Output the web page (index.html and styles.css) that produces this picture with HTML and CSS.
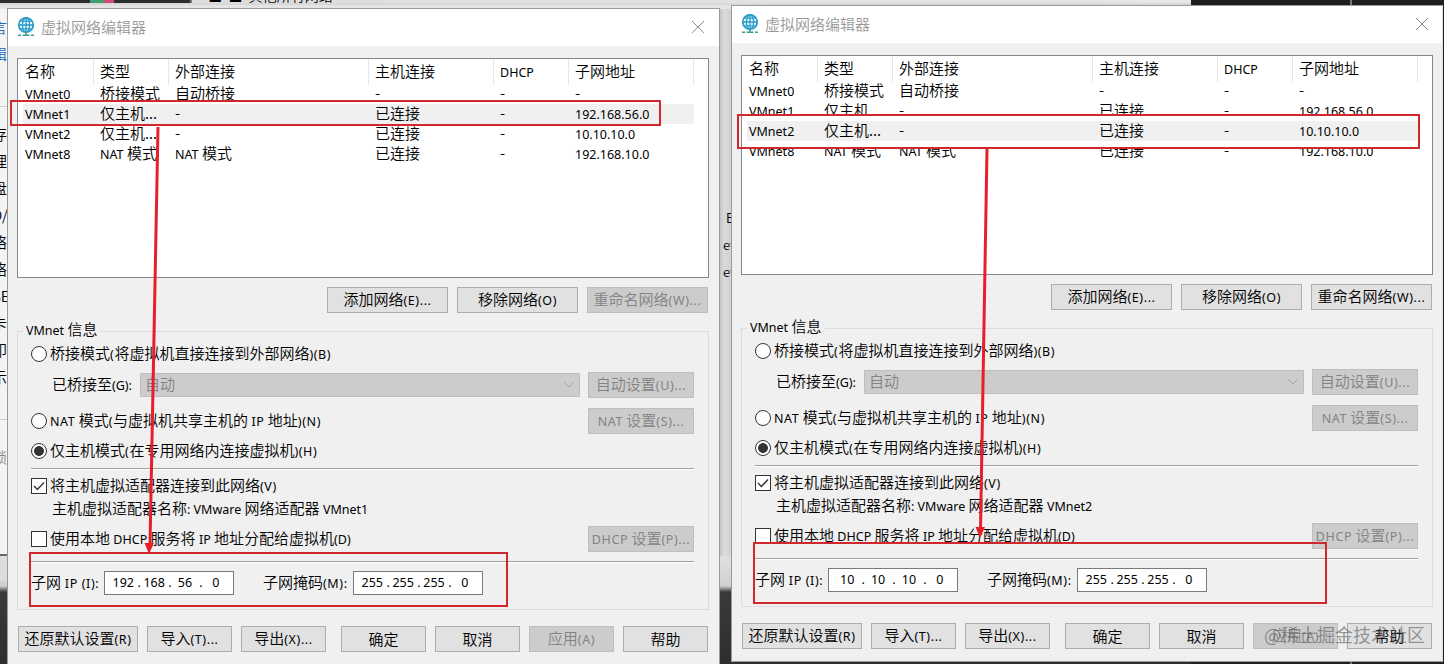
FILE: index.html
```
<!DOCTYPE html>
<html lang="zh">
<head>
    <meta charset="UTF-8">
    <meta name="viewport" content="width=device-width, initial-scale=1.0">
    <title>虚拟网络编辑器</title>
    <link rel="stylesheet" href="styles.css">
</head>
<body>
    <div class="desktop">
        <!-- 背景窗口 -->
        <div class="back-top"><span class="back-tab"></span><span class="back-tab-text">  ■  ■  其他所有网络</span></div>
        <div class="back-dark"></div>
        <div class="back-left">
            <span class="link">言</span>
            <span class="link">辑</span>
            <span class="line"></span>
            <span>存</span>
            <span>理</span>
            <span>盘</span>
            <span>D/</span>
            <span>络</span>
            <span>络</span>
            <span>SE</span>
            <span>卡</span>
            <span>印</span>
            <span>示</span>
            <span class="line low"></span>
            <span class="muted">锁</span>
        </div>
        <div class="back-middle">
            <span>E</span>
            <span>et</span>
            <span>et</span>
        </div>

        <!-- 左侧窗口：VMnet1 -->
        <div class="dialog dialog-left">
            <div class="titlebar">
                <svg class="logo" viewBox="0 0 16 20">
                    <circle cx="8" cy="8" r="7.2" fill="#eaf7fc" stroke="#2a9cc8" stroke-width="1.7"/>
                    <path d="M8 1v14M1 8h14M2.5 4.2h11M2.5 11.8h11" fill="none" stroke="#2a9cc8" stroke-width="1.3"/>
                    <ellipse cx="8" cy="8" rx="3.6" ry="7" fill="none" stroke="#2a9cc8" stroke-width="1.3"/>
                    <path d="M8 15v3M0 18.2h3M4.5 18.2h7M13 18.2h3" stroke="#3f9f92" stroke-width="1.6"/>
                </svg>
                <span class="title">虚拟网络编辑器</span>
                <svg class="close" viewBox="0 0 12 12"><path d="M0 0l12 12M12 0L0 12" stroke="#8c8c8c"/></svg>
            </div>
            <div class="client">
                <div class="list">
                    <div class="list-row list-head"><span>名称</span><span>类型</span><span>外部连接</span><span>主机连接</span><span><small>DHCP</small></span><span>子网地址</span></div>
                    <div class="list-row"><span><small>VMnet0</small></span><span>桥接模式</span><span>自动桥接</span><span>-</span><span>-</span><span>-</span></div>
                    <div class="list-row selected"><span><small>VMnet1</small></span><span>仅主机...</span><span>-</span><span>已连接</span><span>-</span><span><small>192.168.56.0</small></span></div>
                    <div class="list-row"><span><small>VMnet2</small></span><span>仅主机...</span><span>-</span><span>已连接</span><span>-</span><span><small>10.10.10.0</small></span></div>
                    <div class="list-row"><span><small>VMnet8</small></span><span><small>NAT</small> 模式</span><span><small>NAT</small> 模式</span><span>已连接</span><span>-</span><span><small>192.168.10.0</small></span></div>
                </div>
                <div class="list-buttons">
                    <button>添加网络<small>(E)...</small></button>
                    <button>移除网络<small>(O)</small></button>
                    <button disabled>重命名网络<small>(W)...</small></button>
                </div>
                <fieldset class="group">
                    <legend><small>VMnet</small> 信息</legend>
                    <div class="row row-bridge"><i class="radio"></i><span>桥接模式<small>(</small>将虚拟机直接连接到外部网络<small>)(B)</small></span></div>
                    <div class="row row-adapter">
                        <span class="indent">已桥接至<small>(G):</small></span>
                        <div class="combo"><span>自动</span><svg viewBox="0 0 10 6"><path d="M0.5 0.5L5 5L9.5 0.5" fill="none" stroke="#a3a3a3"/></svg></div>
                        <button disabled>自动设置<small>(U)...</small></button>
                    </div>
                    <div class="row row-nat"><i class="radio"></i><span><small>NAT</small> 模式<small>(</small>与虚拟机共享主机的 <small>IP</small> 地址<small>)(N)</small></span><button disabled><small>NAT</small> 设置<small>(S)...</small></button></div>
                    <div class="row row-host"><i class="radio checked"></i><span>仅主机模式<small>(</small>在专用网络内连接虚拟机<small>)(H)</small></span></div>
                    <hr class="sep-host">
                    <div class="row row-connect"><i class="check"><svg viewBox="0 0 14 14"><path d="M2 7l3.4 3.5L12 3.5" fill="none" stroke="#333" stroke-width="1.4"/></svg></i><span>将主机虚拟适配器连接到此网络<small>(V)</small></span></div>
                    <div class="row row-name"><span class="indent">主机虚拟适配器名称<small>: VMware</small> 网络适配器 <small>VMnet1</small></span></div>
                    <div class="row row-dhcp"><i class="check"></i><span>使用本地 <small>DHCP</small> 服务将 <small>IP</small> 地址分配给虚拟机<small>(D)</small></span><button disabled><small>DHCP</small> 设置<small>(P)...</small></button></div>
                    <hr class="sep-dhcp">
                    <div class="row row-ip">
                        <span class="ip-label">子网<small> IP (I):</small></span>
                        <div class="ip"><b>192</b>.<b>168</b>.<b>56</b>.<b>0</b></div>
                        <span class="mask-label">子网掩码<small>(M):</small></span>
                        <div class="ip"><b>255</b>.<b>255</b>.<b>255</b>.<b>0</b></div>
                    </div>
                </fieldset>
                <div class="footer">
                    <button class="wide">还原默认设置<small>(R)</small></button>
                    <button>导入<small>(T)...</small></button>
                    <button>导出<small>(X)...</small></button>
                    <button class="ok">确定</button>
                    <button>取消</button>
                    <button disabled>应用<small>(A)</small></button>
                    <button>帮助</button>
                </div>
            </div>
        </div>

        <!-- 右侧窗口：VMnet2 -->
        <div class="dialog dialog-right">
            <div class="titlebar">
                <svg class="logo" viewBox="0 0 16 20">
                    <circle cx="8" cy="8" r="7.2" fill="#eaf7fc" stroke="#2a9cc8" stroke-width="1.7"/>
                    <path d="M8 1v14M1 8h14M2.5 4.2h11M2.5 11.8h11" fill="none" stroke="#2a9cc8" stroke-width="1.3"/>
                    <ellipse cx="8" cy="8" rx="3.6" ry="7" fill="none" stroke="#2a9cc8" stroke-width="1.3"/>
                    <path d="M8 15v3M0 18.2h3M4.5 18.2h7M13 18.2h3" stroke="#3f9f92" stroke-width="1.6"/>
                </svg>
                <span class="title">虚拟网络编辑器</span>
                <svg class="close" viewBox="0 0 12 12"><path d="M0 0l12 12M12 0L0 12" stroke="#8c8c8c"/></svg>
            </div>
            <div class="client">
                <div class="list">
                    <div class="list-row list-head"><span>名称</span><span>类型</span><span>外部连接</span><span>主机连接</span><span><small>DHCP</small></span><span>子网地址</span></div>
                    <div class="list-row"><span><small>VMnet0</small></span><span>桥接模式</span><span>自动桥接</span><span>-</span><span>-</span><span>-</span></div>
                    <div class="list-row"><span><small>VMnet1</small></span><span>仅主机...</span><span>-</span><span>已连接</span><span>-</span><span><small>192.168.56.0</small></span></div>
                    <div class="list-row selected"><span><small>VMnet2</small></span><span>仅主机...</span><span>-</span><span>已连接</span><span>-</span><span><small>10.10.10.0</small></span></div>
                    <div class="list-row"><span><small>VMnet8</small></span><span><small>NAT</small> 模式</span><span><small>NAT</small> 模式</span><span>已连接</span><span>-</span><span><small>192.168.10.0</small></span></div>
                </div>
                <div class="list-buttons">
                    <button>添加网络<small>(E)...</small></button>
                    <button>移除网络<small>(O)</small></button>
                    <button>重命名网络<small>(W)...</small></button>
                </div>
                <fieldset class="group">
                    <legend><small>VMnet</small> 信息</legend>
                    <div class="row row-bridge"><i class="radio"></i><span>桥接模式<small>(</small>将虚拟机直接连接到外部网络<small>)(B)</small></span></div>
                    <div class="row row-adapter">
                        <span class="indent">已桥接至<small>(G):</small></span>
                        <div class="combo"><span>自动</span><svg viewBox="0 0 10 6"><path d="M0.5 0.5L5 5L9.5 0.5" fill="none" stroke="#a3a3a3"/></svg></div>
                        <button disabled>自动设置<small>(U)...</small></button>
                    </div>
                    <div class="row row-nat"><i class="radio"></i><span><small>NAT</small> 模式<small>(</small>与虚拟机共享主机的 <small>IP</small> 地址<small>)(N)</small></span><button disabled><small>NAT</small> 设置<small>(S)...</small></button></div>
                    <div class="row row-host"><i class="radio checked"></i><span>仅主机模式<small>(</small>在专用网络内连接虚拟机<small>)(H)</small></span></div>
                    <hr class="sep-host">
                    <div class="row row-connect"><i class="check"><svg viewBox="0 0 14 14"><path d="M2 7l3.4 3.5L12 3.5" fill="none" stroke="#333" stroke-width="1.4"/></svg></i><span>将主机虚拟适配器连接到此网络<small>(V)</small></span></div>
                    <div class="row row-name"><span class="indent">主机虚拟适配器名称<small>: VMware</small> 网络适配器 <small>VMnet2</small></span></div>
                    <div class="row row-dhcp"><i class="check"></i><span>使用本地 <small>DHCP</small> 服务将 <small>IP</small> 地址分配给虚拟机<small>(D)</small></span><button disabled><small>DHCP</small> 设置<small>(P)...</small></button></div>
                    <hr class="sep-dhcp">
                    <div class="row row-ip">
                        <span class="ip-label">子网<small> IP (I):</small></span>
                        <div class="ip"><b>10</b>.<b>10</b>.<b>10</b>.<b>0</b></div>
                        <span class="mask-label">子网掩码<small>(M):</small></span>
                        <div class="ip"><b>255</b>.<b>255</b>.<b>255</b>.<b>0</b></div>
                    </div>
                </fieldset>
                <div class="footer">
                    <button class="wide">还原默认设置<small>(R)</small></button>
                    <button>导入<small>(T)...</small></button>
                    <button>导出<small>(X)...</small></button>
                    <button class="ok">确定</button>
                    <button>取消</button>
                    <button disabled>应用<small>(A)</small></button>
                    <button>帮助</button>
                </div>
            </div>
        </div>

        <!-- 红色标注 -->
        <div class="mark mark-row1"></div>
        <div class="mark mark-ip1"></div>
        <div class="mark mark-row2"></div>
        <div class="mark mark-ip2"></div>
        <svg class="arrows" viewBox="0 0 1444 664">
            <path d="M158 127L150 545M987 149L980.5 530" stroke="#e5202a" stroke-width="3"/>
            <path d="M144.5 543h9.5l-5 11zM975.5 527h9.5l-5 11z" fill="#e5202a"/>
        </svg>
        <div class="watermark">@稀土掘金技术社区</div>
    </div>
</body>
</html>
```
FILE: styles.css
```
* {
    box-sizing: border-box;
}
body {
    margin: 0;
    font-family: "Noto Sans CJK SC", sans-serif;
    font-size: 15px;
    font-weight: 350;
    color: #000;
}
small {
    font-family: "Noto Sans", sans-serif;
    font-size: 12.5px;
    font-weight: 400;
    white-space: pre;
}
.desktop {
    position: relative;
    width: 1444px;
    height: 664px;
    overflow: hidden;
    background: linear-gradient(#e4e4e4 555px, #555 555px, #555 556px, #e0e0e0 556px, #d0d0d0 586px, #3a3a3a 592px, #2e2e2e);
}

/* 背景窗口 */
.back-top {
    position: absolute;
    left: 0;
    top: 0;
    width: 1191px;
    height: 5px;
    overflow: hidden;
    background: linear-gradient(90deg, #2d2d2d 190px, #777 190px, #777 192px, #ddd 192px, #e6e6e6);
    border-bottom: 2px solid #d8d8d8;
}
.back-tab {
    position: absolute;
    left: 90px;
    top: 0;
    width: 24px;
    height: 3px;
    background: linear-gradient(90deg, #3f9f70 14px, #d04a7a 14px);
}
.back-tab-text {
    position: absolute;
    left: 202px;
    top: -13px;
    font-size: 14px;
    line-height: 16px;
    white-space: pre;
}
.back-dark {
    position: absolute;
    left: 1191px;
    right: 0;
    top: 0;
    bottom: 0;
    background: linear-gradient(90deg, #1f1f1f 159px, #777 159px, #777 161px, #1f1f1f 161px);
}
.back-left {
    position: absolute;
    left: 0;
    top: 9px;
    width: 7px;
    height: 572px;
    padding-top: 5px;
    overflow: hidden;
    background: linear-gradient(#f4f4f4 545px, #666 545px, #666 547px, #dcdcdc 547px);
    display: flex;
    flex-direction: column;
}
.back-left span {
    height: 27px;
    flex: none;
    margin-left: -8px;
    line-height: 26px;
    white-space: nowrap;
}
.back-left .link {
    color: #2468b5;
}
.back-left .muted {
    color: #888;
}
.back-left .line {
    height: 1px;
    margin: 38px 0 14px;
    background: #ccc;
}
.back-left .low {
    margin: 28px 0 24px;
}
.back-middle {
    position: absolute;
    left: 720px;
    top: 9px;
    width: 11px;
    height: 547px;
    padding: 195px 0 0 6px;
    overflow: hidden;
    background: linear-gradient(90deg, #c4c4c4, #dadada 4px, #d2d2d2);
    font-size: 13px;
    line-height: 27px;
}
.back-middle span {
    display: block;
}
.back-middle span + span {
    margin-left: -3px;
}

/* 对话框 */
.dialog {
    position: absolute;
    width: 713px;
    height: 658px;
    background: #f0f0f0;
    border: 1px solid #9a9a9a;
}
.dialog-left {
    left: 7px;
    top: 8px;
}
.dialog-right {
    left: 731px;
    top: 5px;
    width: 712px;
    height: 657px;
    border-right-color: #e0e0e0;
}
.titlebar {
    display: flex;
    align-items: center;
    height: 37px;
    padding: 0 14px 2px 10px;
    background: #fff;
}
.dialog-left .titlebar {
    padding-right: 15px;
}
.logo {
    width: 16px;
    height: 20px;
}
.title {
    margin-left: 7px;
    color: #999;
    flex: 1;
}
.close {
    width: 12px;
    height: 12px;
    overflow: visible;
}
.client {
    width: 711px;
    padding: 12px 10px 0 9px;
}
.list {
    width: 692px;
    height: 220px;
    border: 1px solid #828790;
    background: #fff;
}
.list-row {
    display: grid;
    grid-template-columns: 75px 75px 200px 125px 75px 125px;
    width: 676px;
    height: 20px;
    line-height: 18px;
}
.list-row span {
    padding-left: 7px;
    white-space: nowrap;
}
.list-head {
    height: 25px;
    line-height: 24px;
}
.list-head span {
    box-shadow: 1px 0 #e5e5e5;
}
.selected {
    background: linear-gradient(90deg, #fff 5px, #f0f0f0 5px);
}
button {
    width: 106px;
    height: 26px;
    flex: none;
    padding: 0;
    border: 1px solid #adadad;
    background: #e1e1e1;
    color: #000;
    font: inherit;
    line-height: 22px;
    white-space: nowrap;
}
button small {
    letter-spacing: 0.6px;
}
button:disabled {
    border-color: #bfbfbf;
    background: #ccc;
    color: #838383;
}
.list-buttons {
    display: flex;
    justify-content: flex-end;
    gap: 9px;
    margin-top: 9px;
    padding-right: 1px;
}
.list-buttons button {
    width: 121px;
}
.group {
    width: 692px;
    height: 289px;
    margin: 8px 0 0;
    padding: 0 14px 0 13px;
    border: 1px solid #dcdcdc;
}
legend {
    height: 20px;
    margin-left: -8px;
    padding: 0 3px;
    line-height: 16px;
}
.row {
    display: flex;
    align-items: center;
    height: 26px;
    white-space: nowrap;
}
.row span {
    padding-bottom: 4px;
}
.row-bridge small,
.row-nat span small,
.row-host small,
.row-connect small,
.row-ip small {
    letter-spacing: 0.6px;
}
.row-adapter {
    margin-top: 5px;
}
.row-nat {
    margin-top: 10px;
}
.row-host {
    margin-top: 4px;
}
.row-connect {
    margin-top: 3px;
}
.row-name {
    height: 20px;
}
.row-dhcp {
    margin-top: 7px;
}
.row-ip {
    height: 24px;
    margin-top: 8px;
}
.row button {
    margin-left: auto;
}
.indent {
    padding-left: 21px;
}
.row-adapter .indent {
    width: 109px;
}
.radio,
.check {
    flex: none;
    width: 16px;
    height: 16px;
    margin-right: 3px;
    border: 1px solid #333;
    background: #fff;
}
.radio {
    border-radius: 50%;
}
.radio.checked {
    background: radial-gradient(circle, #333 4.5px, #fff 5.3px);
}
.check svg {
    display: block;
    width: 14px;
    height: 14px;
}
.combo {
    display: flex;
    align-items: center;
    justify-content: space-between;
    width: 440px;
    height: 24px;
    padding: 0 5px 0 4px;
    border: 1px solid #bfbfbf;
    background: #ccc;
    color: #838383;
}
.combo svg {
    width: 10px;
    height: 6px;
}
hr {
    height: 2px;
    margin: 4px 0 0;
    border: 0;
    border-top: 1px solid #a0a0a0;
    background: #fff;
}
.sep-dhcp {
    margin-top: 9px;
}
.ip-label {
    width: 73px;
}
.mask-label {
    width: 119px;
    padding-left: 29px;
}
.ip {
    display: flex;
    width: 130px;
    height: 24px;
    padding-left: 5px;
    border: 1px solid #7a7a7a;
    background: #fff;
    font-family: "Noto Sans", sans-serif;
    font-size: 12.5px;
    font-weight: 400;
    line-height: 21px;
}
.ip b {
    width: 28.5px;
    margin-left: -1px;
    font-weight: 400;
    text-align: center;
}
.footer {
    display: flex;
    gap: 9px;
    margin-top: 16px;
    padding-left: 1px;
}
.footer button {
    width: 85px;
}
.footer .wide {
    width: 120px;
}
.footer .ok {
    margin-left: 6px;
}

/* 标注 */
.mark {
    position: absolute;
    border: 2px solid #d1282e;
}
.mark-row1 {
    left: 10px;
    top: 100px;
    width: 651px;
    height: 26px;
}
.mark-ip1 {
    left: 29px;
    top: 552px;
    width: 479px;
    height: 55px;
}
.mark-row2 {
    left: 737px;
    top: 114px;
    width: 683px;
    height: 35px;
    background: linear-gradient(#fff 5px, transparent 5px, transparent 25px, #fff 25px) 3px 0 no-repeat;
}
.mark-ip2 {
    left: 753px;
    top: 542px;
    width: 574px;
    height: 62px;
    background: linear-gradient(#f0f0f0, #f0f0f0) 0 0 / 557px 8px no-repeat;
}
.arrows {
    position: absolute;
    left: 0;
    top: 0;
    width: 1444px;
    height: 664px;
}
.watermark {
    position: absolute;
    left: 1264px;
    top: 621px;
    font-size: 18px;
    font-weight: 400;
    line-height: 26px;
    white-space: nowrap;
    color: rgba(90, 90, 90, 0.6);
}
```
